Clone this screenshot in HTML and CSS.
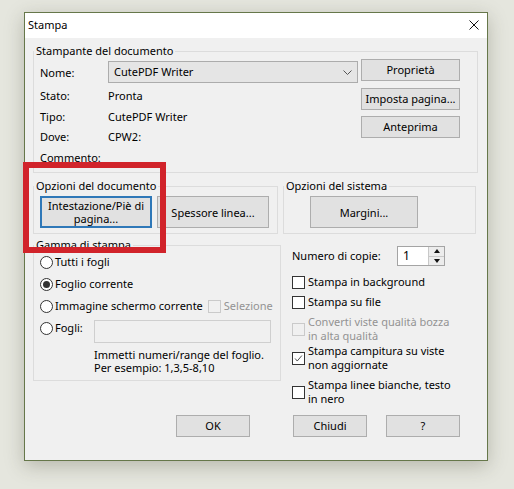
FILE: index.html
```html
<!DOCTYPE html>
<html lang="it">
<head>
<meta charset="utf-8">
<title>Stampa</title>
<link rel="stylesheet" href="styles.css">
</head>
<body>
<div class="screen">
  <div class="dialog">
    <div class="titlebar">
      <span class="title">Stampa</span>
      <svg class="close" viewBox="0 0 10 10"><path d="M0.5 0.5L9.5 9.5M9.5 0.5L0.5 9.5"/></svg>
    </div>

    <div class="content">
      <fieldset class="group">
        <legend>Stampante del documento</legend>
        <div class="printer">
          <div class="printer-info">
            <span class="key">Nome:</span>
            <div class="combo">
              <span>CutePDF Writer</span>
              <svg class="chevron" viewBox="0 0 9 5"><path d="M0.5 0.5L4.5 4.5L8.5 0.5"/></svg>
            </div>
            <span class="key">Stato:</span><span>Pronta</span>
            <span class="key">Tipo:</span><span>CutePDF Writer</span>
            <span class="key">Dove:</span><span>CPW2:</span>
            <span class="key">Commento:</span><span></span>
          </div>
          <div class="printer-actions">
            <button class="btn">Proprietà</button>
            <button class="btn">Imposta pagina...</button>
            <button class="btn">Anteprima</button>
          </div>
        </div>
      </fieldset>

      <div class="options-row">
        <fieldset class="group doc-options">
          <legend>Opzioni del documento</legend>
          <div class="option-buttons">
            <button class="btn tall focused">Intestazione/Piè di<br>pagina...</button>
            <button class="btn tall">Spessore linea...</button>
          </div>
        </fieldset>
        <fieldset class="group sys-options">
          <legend>Opzioni del sistema</legend>
          <div class="option-buttons">
            <button class="btn tall margins">Margini...</button>
          </div>
        </fieldset>
      </div>

      <div class="range-row">
        <fieldset class="group range">
          <legend>Gamma di stampa</legend>
          <div class="radios">
            <label class="radio"><span class="dot"></span>Tutti i fogli</label>
            <label class="radio"><span class="dot on"></span>Foglio corrente</label>
            <div class="radio-line">
              <label class="radio"><span class="dot"></span>Immagine schermo corrente</label>
              <label class="check disabled selection"><span class="box"></span>Selezione</label>
            </div>
            <div class="sheets">
              <label class="radio"><span class="dot"></span>Fogli:</label>
              <div class="field"></div>
              <p class="hint">Immetti numeri/range del foglio.<br>Per esempio: 1,3,5-8,10</p>
            </div>
          </div>
        </fieldset>

        <div class="print-opts">
          <div class="copies">
            <span class="copies-label">Numero di copie:</span>
            <div class="spinner">
              <span class="spin-value">1</span>
              <div class="spin-buttons">
                <span class="spin up"></span>
                <span class="spin down"></span>
              </div>
            </div>
          </div>
          <div class="checks">
            <label class="check"><span class="box"></span><span>Stampa in background</span></label>
            <label class="check"><span class="box"></span><span>Stampa su file</span></label>
            <label class="check disabled"><span class="box"></span><span>Converti viste qualità bozza<br>in alta qualità</span></label>
            <label class="check close-up"><span class="box"><svg viewBox="0 0 13 13"><path d="M2.5 6.5L5 9.5L10.5 3"/></svg></span><span>Stampa campitura su viste<br>non aggiornate</span></label>
            <label class="check"><span class="box"></span><span>Stampa linee bianche, testo<br>in nero</span></label>
          </div>
        </div>
      </div>

      <div class="dialog-buttons">
        <button class="btn wide ok">OK</button>
        <button class="btn wide cancel">Chiudi</button>
        <button class="btn wide">?</button>
      </div>
    </div>
  </div>

  <div class="highlight"></div>
</div>
</body>
</html>
```

FILE: styles.css
```css
* {
box-sizing: border-box;
}

body {
margin: 0;
background-color: #e5e6de;
font-family: "Noto Sans", "DejaVu Sans", sans-serif;
font-size: 11px;
line-height: 16px;
color: #000;
}

.screen {
position: relative;
padding: 12px 0 0 24px;
height: 489px;
overflow: hidden;
}

.dialog {
width: 464px;
height: 449px;
background-color: #f0f0f0;
border: 1px solid #66774a;
box-shadow: 0 5px 18px rgba(60, 60, 40, 0.28);
}

.titlebar {
height: 25px;
background-color: #fff;
display: flex;
align-items: center;
justify-content: space-between;
padding: 0 8px 2px 3px;
}

.close {
width: 10px;
height: 10px;
fill: none;
stroke: #111;
stroke-width: 1;
}

.content {
padding: 5px 9px 0 8px;
}

/* group boxes */
.group {
margin: 0;
padding: 0;
border: 1px solid #dcdcdc;
min-width: 0;
}

.group legend {
padding: 0 2px;
line-height: 16px;
}

/* printer */
.printer {
display: flex;
padding: 0 17px 4px 6px;
}

.printer-info {
display: grid;
grid-template-columns: 68px 250px;
grid-template-rows: 27px repeat(4, 20.5px);
align-items: center;
margin-right: 3px;
}

.combo {
align-self: start;
margin-top: 2px;
height: 22px;
display: flex;
align-items: center;
justify-content: space-between;
padding: 0 5px 0 5px;
background-color: #e5e5e5;
border: 1px solid #acacac;
}

.chevron {
width: 9px;
height: 5px;
fill: none;
stroke: #555;
stroke-width: 1;
}

.printer-actions {
display: flex;
flex-direction: column;
gap: 6.5px;
}

.btn {
font: inherit;
color: #000;
height: 22px;
width: 99px;
padding: 0;
background-color: #e1e1e1;
border: 1px solid #adadad;
line-height: 16px;
white-space: nowrap;
}

.btn.tall {
height: 32px;
width: 112px;
line-height: 13px;
}

.btn.focused {
border: 2px solid #2f78b8;
}

.btn.margins {
width: 108px;
margin-left: 19px;
}

.btn.wide {
width: 74px;
}

/* document / system options */
.options-row {
display: flex;
gap: 5px;
margin-top: 5px;
}

.doc-options {
width: 245px;
}

.sys-options {
width: 193px;
}

.option-buttons {
display: flex;
gap: 5px;
padding: 2px 6px 5px 6px;
}

.sys-options .option-buttons {
padding-left: 7px;
}

/* print range */
.range-row {
display: flex;
align-items: flex-start;
margin-top: 3px;
}

.range {
width: 248px;
flex-shrink: 0;
}

.radios {
display: flex;
flex-direction: column;
gap: 6px;
padding: 1px 6px 6px 6px;
}

.radio {
display: flex;
align-items: center;
gap: 2px;
white-space: nowrap;
flex-shrink: 0;
}

.dot {
width: 13px;
height: 13px;
flex-shrink: 0;
border: 1px solid #333;
border-radius: 50%;
background-color: #fff;
display: flex;
align-items: center;
justify-content: center;
}

.dot.on::after {
content: "";
width: 7px;
height: 7px;
border-radius: 50%;
background-color: #333;
}

.radio-line {
display: flex;
align-items: center;
}

.selection {
margin-left: 5px;
white-space: nowrap;
}

.sheets {
display: grid;
grid-template-columns: 54px 177px;
grid-template-rows: 23px auto;
}

.sheets .radio {
align-self: start;
}

.field {
height: 23px;
border: 1px solid #cfcfcf;
background-color: #f0f0f0;
}

.hint {
grid-column: 2;
margin: 5px 0 0 0;
line-height: 13px;
}

/* right column */
.print-opts {
margin-left: 11px;
padding-top: 9px;
}

.copies {
display: flex;
align-items: center;
}

.copies-label {
width: 105px;
}

.spinner {
display: flex;
width: 48px;
height: 20px;
border: 1px solid #a4a4a4;
background-color: #fff;
}

.spin-value {
flex: 1;
padding-left: 5px;
line-height: 18px;
font-size: 12px;
}

.spin-buttons {
width: 16px;
display: flex;
flex-direction: column;
border-left: 1px solid #c8c8c8;
}

.spin {
flex: 1;
background-color: #ececec;
display: flex;
align-items: center;
justify-content: center;
}

.spin.up {
border-bottom: 1px solid #c8c8c8;
}

.spin.up::after {
content: "";
border-left: 3px solid transparent;
border-right: 3px solid transparent;
border-bottom: 4px solid #111;
}

.spin.down::after {
content: "";
border-left: 3px solid transparent;
border-right: 3px solid transparent;
border-top: 4px solid #111;
}

.checks {
display: flex;
flex-direction: column;
gap: 6px;
margin-top: 9px;
}

.check {
display: flex;
align-items: center;
gap: 3px;
line-height: 14px;
}

.check.close-up {
margin-top: -5px;
}

.box {
width: 13px;
height: 13px;
flex-shrink: 0;
border: 1px solid #333;
background-color: #fff;
}

.box svg {
display: block;
width: 11px;
height: 11px;
fill: none;
stroke: #333;
stroke-width: 1;
}

.check.disabled {
color: #939393;
}

.check.disabled .box {
border-color: #cacaca;
background-color: #f0f0f0;
}

/* bottom buttons */
.dialog-buttons {
display: flex;
justify-content: flex-end;
margin-top: 9px;
padding-right: 18px;
}

.ok {
margin-right: 43px;
}

.cancel {
margin-right: 19px;
}

.highlight {
position: absolute;
left: 23px;
top: 162px;
width: 143px;
height: 91px;
border: 6px solid #d1232a;
}
```
